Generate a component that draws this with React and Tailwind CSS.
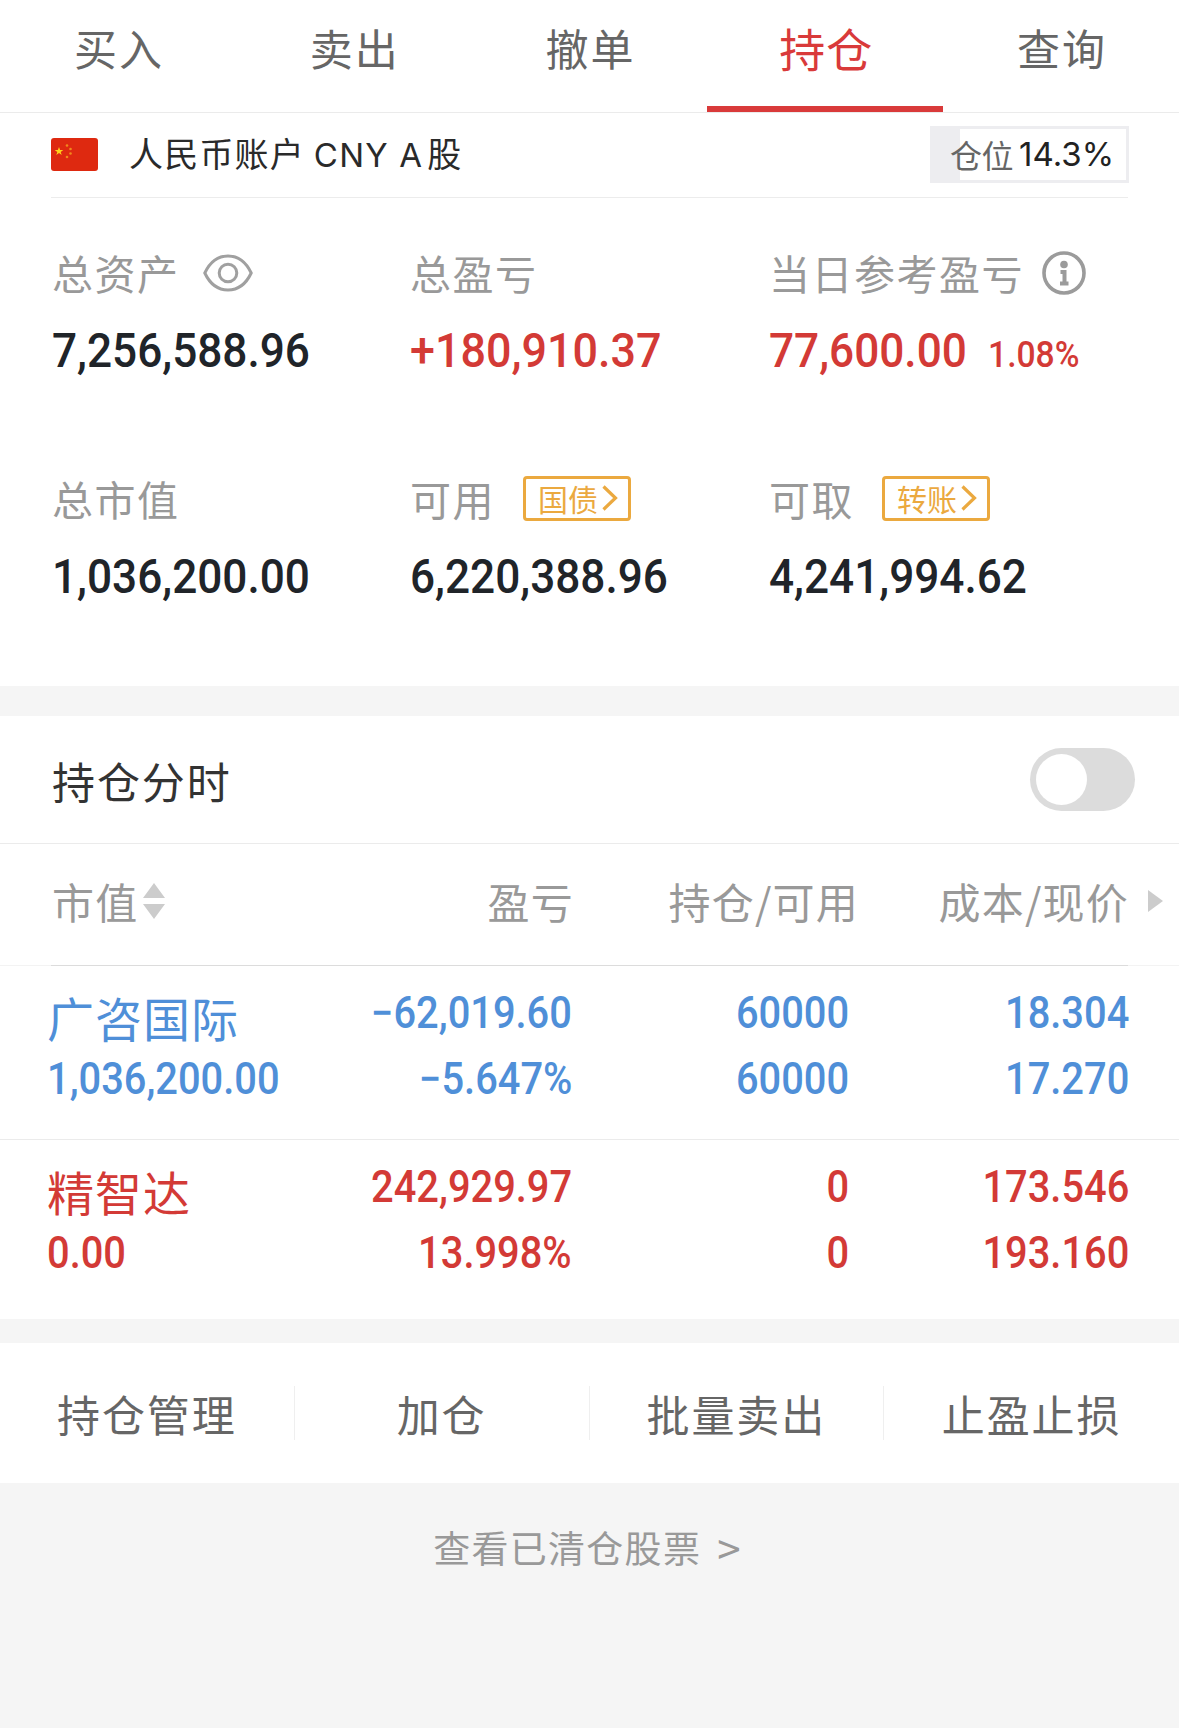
import React, { useState } from 'react';

const tabs = ['买入', '卖出', '撤单', '持仓', '查询'];

const positions = [
  {
    name: '广咨国际',
    value: '1,036,200.00',
    profit: '−62,019.60',
    rate: '−5.647%',
    amount: '60000',
    usable: '60000',
    cost: '18.304',
    price: '17.270',
    color: 'text-[#4f8fd8]',
  },
  {
    name: '精智达',
    value: '0.00',
    profit: '242,929.97',
    rate: '13.998%',
    amount: '0',
    usable: '0',
    cost: '173.546',
    price: '193.160',
    color: 'text-[#d33a36]',
  },
];

const actions = ['持仓管理', '加仓', '批量卖出', '止盈止损'];

const ChinaFlag = () => (
  <svg width="47" height="33" viewBox="0 0 47 33">
    <rect width="47" height="33" rx="3" fill="#de2910" />
    <path
      d="M8 9l1.1 3h3.2l-2.6 1.9 1 3.1L8 15.1 5.3 17l1-3.1L3.700 12h3.200z"
      fill="#ffd21a"
    />
    <g fill="#f08a1c">
      <circle cx="16" cy="7.500" r="1.300" />
      <circle cx="19.500" cy="11" r="1.300" />
      <circle cx="19.500" cy="15.500" r="1.300" />
      <circle cx="16" cy="19" r="1.300" />
    </g>
  </svg>
);

const EyeIcon = () => (
  <svg width="50" height="38" viewBox="0 0 50 38" fill="none" stroke="#a0a0a0" strokeWidth="3">
    <path d="M1.800 19C7 8 14.500 2 25 2s18 6 23.200 17C43 30 35.500 36 25 36S7 30 1.800 19z" />
    <circle cx="25" cy="19" r="8.800" />
  </svg>
);

const InfoIcon = () => (
  <svg width="44" height="44" viewBox="0 0 44 44" fill="none" stroke="#9b9b9b">
    <circle cx="22" cy="22" r="20" strokeWidth="3.600" />
    <circle cx="22" cy="13.500" r="3.800" fill="#9b9b9b" stroke="none" />
    <path d="M18.500 21h4v11.500M18 32.500h8.500" strokeWidth="4" />
  </svg>
);

// Numbers are set a little narrower than the text font
const Num = ({ children, right, scale = 'scale-x-[0.92]', className = '' }) => (
  <span
    className={`inline-block whitespace-nowrap font-['Roboto',sans-serif] font-medium ${scale} ${
      right ? 'origin-right' : 'origin-left'
    } ${className}`}
  >
    {children}
  </span>
);

const CellNum = ({ children, right = true }) => (
  <Num right={right} scale="scale-x-[0.905]">
    {children}
  </Num>
);

const LinkBadge = ({ text }) => (
  <button className="flex h-[45px] w-[108px] items-center rounded-[4px] border-[3px] border-[#eba93f] pl-[12px] text-[30px] leading-[39px] text-[#eba93f]">
    {text}
    <svg className="ml-[4px] shrink-0" width="16" height="26" viewBox="0 0 16 26" fill="none" stroke="#eba93f" strokeWidth="3.200">
      <path d="M1.500 1.500L13.500 13 1.500 24.500" />
    </svg>
  </button>
);

const Stat = ({ label, extra, children }) => (
  <div>
    <div className="flex h-[60px] items-center text-[41px] leading-[60px] tracking-[1.500px] text-[#999]">
      <span>{label}</span>
      {extra}
    </div>
    <div className="mt-[19px] flex h-[60px] items-baseline text-[48px] leading-[60px]">{children}</div>
  </div>
);

const App = () => {
  const [activeTab, setActiveTab] = useState('持仓');
  const [showChart, setShowChart] = useState(false);

  return (
    <div className="min-h-[1728px] w-full bg-[#f5f5f5] font-['Noto_Sans_CJK_SC',sans-serif]">
      {/* Tabs */}
      <div className="grid h-[113px] grid-cols-5 border-b border-[#ebebeb] bg-white">
        {tabs.map((tab) => (
          <button
            key={tab}
            onClick={() => setActiveTab(tab)}
            className={`flex h-[112px] justify-center border-b-[6px] pt-[17px] pl-[2px] leading-[60px] ${
              tab === activeTab
                ? 'border-[#d93a3a] text-[46px] tracking-[1px] text-[#d93a3a]'
                : 'border-transparent text-[43px] tracking-[2px] text-[#666]'
            }`}
          >
            {tab}
          </button>
        ))}
      </div>

      {/* Account */}
      <div className="bg-white px-[51px]">
        <div className="flex h-[85px] items-center border-b border-[#ececec] pb-[2px]">
          <ChinaFlag />
          <div className="ml-[31px] text-[34px] leading-[50px] tracking-[1.200px] text-[#2a2a2a]">
            人民币账户 <span className="font-['Inter',sans-serif] text-[33px]">CNY A</span>
            <span className="ml-[4px]">股</span>
          </div>
          <div className="relative -mr-px ml-auto flex h-[57px] w-[199px] items-center border-[3px] border-[#ededf0] pl-[17px]">
            <div className="absolute inset-y-0 left-0 w-[27px] bg-[#ededf0]" />
            <span className="relative text-[32px] leading-[50px] tracking-[-0.500px] text-[#666]">仓位</span>
            <span className="relative ml-[6px] font-['Inter',sans-serif] text-[33px] leading-[50px] text-[#222]">
              14.3%
            </span>
          </div>
        </div>
      </div>

      {/* Assets */}
      <div className="h-[488px] bg-white pt-[44px] pl-[52px]">
        <div className="grid grid-cols-[358px_359px_1fr] text-[#202429]">
          <Stat label="总资产" extra={<span className="ml-[23px] pt-[2px]"><EyeIcon /></span>}>
            <Num>7,256,588.96</Num>
          </Stat>
          <Stat label="总盈亏">
            <Num className="text-[#d33a36]" scale="scale-x-[0.935]">+180,910.37</Num>
          </Stat>
          <Stat label="当日参考盈亏" extra={<span className="ml-[18px] pt-[1px]"><InfoIcon /></span>}>
            <Num className="text-[#d33a36]">77,600.00</Num>
            <Num className="ml-[4px] text-[36px] text-[#d33a36]" scale="scale-x-[0.935]">1.08%</Num>
          </Stat>
        </div>
        <div className="mt-[87px] grid grid-cols-[358px_359px_1fr] text-[#202429]">
          <Stat label="总市值">
            <Num>1,036,200.00</Num>
          </Stat>
          <Stat label="可用" extra={<span className="ml-[28px] tracking-normal"><LinkBadge text="国债" /></span>}>
            <Num>6,220,388.96</Num>
          </Stat>
          <Stat label="可取" extra={<span className="ml-[28px] tracking-normal"><LinkBadge text="转账" /></span>}>
            <Num>4,241,994.62</Num>
          </Stat>
        </div>
      </div>

      {/* Intraday switch */}
      <div className="mt-[30px] flex h-[128px] items-center justify-between border-b border-[#ebebeb] bg-white pr-[44px] pl-[52px]">
        <span className="text-[43px] leading-[60px] tracking-[1.900px] text-[#333]">持仓分时</span>
        <button
          onClick={() => setShowChart(!showChart)}
          className={`flex h-[63px] w-[105px] items-center rounded-full px-[6px] ${
            showChart ? 'justify-end bg-[#d93a3a]' : 'bg-[#dcdcdc]'
          }`}
        >
          <span className="size-[51px] rounded-full bg-white" />
        </button>
      </div>

      {/* Table header */}
      <div className="bg-white">
        <div className="flex h-[121px] items-center pb-[7px] pl-[52px] text-[42px] leading-[60px] tracking-[1.200px] text-[#999]">
          <div className="flex w-[300px] items-center">
            市值
            <svg className="ml-[5px]" width="22" height="36" viewBox="0 0 22 36" fill="#ccc">
              <path d="M11 0l11 15H0zM0 21h22L11 36z" />
            </svg>
          </div>
          <div className="w-[222px] text-right">盈亏</div>
          <div className="w-[285px] text-right">持仓/可用</div>
          <div className="w-[270px] text-right">成本/现价</div>
          <svg className="ml-[19px]" width="15" height="22" viewBox="0 0 15 22" fill="#ccc">
            <path d="M0 0l15 11L0 22z" />
          </svg>
        </div>
        <div className="h-px bg-[#f3f3f3] px-[51px]">
          <div className="h-px bg-[#dcdcdc]" />
        </div>
      </div>

      {/* Positions */}
      {positions.map((item, index) => (
        <div
          key={item.name}
          className={`flex bg-white pt-[17px] pl-[47px] text-[44px] leading-[60px] ${item.color} ${
            index === 0 ? 'h-[174px] border-b border-[#ebebeb]' : 'h-[179px]'
          }`}
        >
          <div className="flex w-[264px] flex-col items-start gap-[2px] pt-[4px]">
            <div className="text-[47px] leading-[60px] tracking-[1px]">{item.name}</div>
            <CellNum right={false}>{item.value}</CellNum>
          </div>
          <div className="flex w-[261px] flex-col items-end gap-[6px]">
            <CellNum>{item.profit}</CellNum>
            <CellNum>{item.rate}</CellNum>
          </div>
          <div className="flex w-[277px] flex-col items-end gap-[6px]">
            <CellNum>{item.amount}</CellNum>
            <CellNum>{item.usable}</CellNum>
          </div>
          <div className="flex w-[280px] flex-col items-end gap-[6px]">
            <CellNum>{item.cost}</CellNum>
            <CellNum>{item.price}</CellNum>
          </div>
        </div>
      ))}

      {/* Actions */}
      <div className="mt-[24px] grid h-[140px] grid-cols-4 items-center bg-white">
        {actions.map((action) => (
          <button
            key={action}
            className="h-[54px] border-r border-[#efefef] text-[43px] leading-[52px] tracking-[1.900px] text-[#666] last:border-r-0"
          >
            {action}
          </button>
        ))}
      </div>

      <div className="flex justify-center pt-[36px] pr-[4px] text-[37px] leading-[56px] tracking-[1.300px] text-[#999]">
        查看已清仓股票
        <span className="ml-[16px] text-[42px]">&gt;</span>
      </div>
    </div>
  );
};

export default App;
